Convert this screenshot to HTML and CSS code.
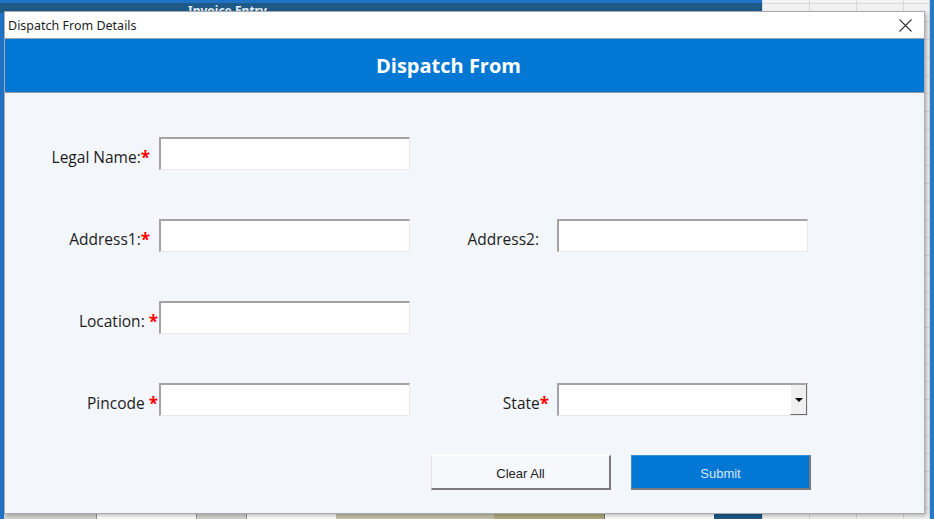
FILE: index.html
```html
<!DOCTYPE html>
<html>
<head>
	<meta charset="UTF-8">
	<title>Dispatch From Details</title>
	<link rel="stylesheet" href="styles.css">
</head>
<body>
	<div class="desktop">
		<div class="sheet-top">
			<div class="sheet-band"><span class="sheet-title">Invoice Entry</span></div>
		</div>
		<div class="sheet-grid"></div>
		<div class="sheet-edge"></div>
		<div class="sheet-bottom">
			<span class="cell c1"></span>
			<span class="cell c2"></span>
			<span class="cell c3"></span>
			<span class="cell c4"></span>
			<span class="cell c5"></span>
			<span class="cell c6"></span>
			<span class="cell c7"></span>
			<span class="cell c8"></span>
		</div>

		<div class="dialog">
			<div class="titlebar">
				<span class="caption">Dispatch From Details</span>
				<svg class="close" width="13" height="13" viewBox="0 0 13 13">
					<path d="M0.5 0.5 L12.5 12.5 M12.5 0.5 L0.5 12.5" stroke="#333" stroke-width="1.1" fill="none"/>
				</svg>
			</div>
			<div class="banner">Dispatch From</div>
			<div class="form">
				<div class="grid">
					<label class="lbl">Legal Name:<b>*</b></label>
					<div class="field"></div>
					<span></span>
					<span></span>

					<label class="lbl">Address1:<b>*</b></label>
					<div class="field"></div>
					<label class="lbl lbl-wide">Address2:</label>
					<div class="field"></div>

					<label class="lbl lbl-tight">Location: <b>*</b></label>
					<div class="field"></div>
					<span></span>
					<span></span>

					<label class="lbl lbl-tight">Pincode <b>*</b></label>
					<div class="field"></div>
					<label class="lbl lbl-state">State<b>*</b></label>
					<div class="field combo"><span class="drop"><i></i></span></div>
				</div>
				<div class="actions">
					<button class="btn">Clear All</button>
					<button class="btn btn-blue">Submit</button>
				</div>
			</div>
		</div>
	</div>
</body>
</html>
```

FILE: styles.css
```css
*{
	padding: 0;
	margin: 0;
	box-sizing: border-box;
}
body{
	width: 934px;
	height: 519px;
	overflow: hidden;
	background: #e9e9e9;
	font-family: "Noto Sans", "Open Sans", sans-serif;
}
.desktop{
	width: 934px;
	height: 519px;
	position: relative;
	overflow: hidden;
	background: #f2f2f2;
}

/* sheet behind the form */
.sheet-top{
	height: 13px;
	width: 762px;
	background: #1f72c4;
	padding-top: 3px;
}
.sheet-band{
	height: 10px;
	background: #1d5a88;
	position: relative;
}
.sheet-title{
	position: absolute;
	left: 188px;
	top: 1px;
	color: #e8eef5;
	font-weight: bold;
	font-size: 12px;
	line-height: 14px;
}
.sheet-grid{
	position: absolute;
	left: 762px;
	top: 0;
	width: 168px;
	height: 519px;
	background-color: #f3f3f3;
	background-image:
		linear-gradient(#d9d9d9 1px, transparent 1px),
		linear-gradient(90deg, #d9d9d9 1px, transparent 1px);
	background-size: 47px 18px;
	background-position: 0 3px;
}
.sheet-edge{
	position: absolute;
	left: 929px;
	top: 0;
	width: 5px;
	height: 519px;
	background: #2a78c6;
	border-left: 1px solid #c9d3de;
}
.desktop::before{
	content: "";
	position: absolute;
	left: 0;
	top: 0;
	width: 4px;
	height: 519px;
	background: #1f72c4;
}
.sheet-bottom{
	position: absolute;
	left: 4px;
	top: 513px;
	width: 758px;
	height: 6px;
	display: flex;
}
.cell{
	height: 6px;
}
.c1{ width: 92px; background: #d6d6d2; }
.c2{ width: 100px; background: #fff; border-left: 1px solid #999; }
.c3{ width: 50px; background: #d6d6d2; border-left: 1px solid #999; }
.c4{ width: 90px; background: #fff; border-left: 1px solid #999; }
.c5{ width: 158px; background: #c9c6ae; }
.c6{ width: 110px; background: #b3ae80; }
.c7{ width: 110px; background: #fff; border-top: 1px solid #777; border-left: 1px solid #777; }
.c8{ width: 48px; background: #1d5a88; }

/* dialog */
.dialog{
	position: absolute;
	left: 4px;
	top: 11px;
	width: 921px;
	height: 503px;
	background: #f3f6fb;
	border: 1px solid #a8acb2;
	box-shadow: 2px 2px 4px rgba(0,0,0,0.25);
	display: flex;
	flex-direction: column;
}
.titlebar{
	height: 27px;
	background: #fff;
	display: flex;
	align-items: center;
	justify-content: space-between;
	padding: 0 12px 0 3px;
	border-bottom: 1px solid #9aa0a6;
}
.caption{
	font-size: 12.5px;
	color: #1e1e1e;
	margin-top: 1px;
}
.close{
	margin-top: 1px;
}
.banner{
	height: 54px;
	background: #0277d4;
	color: #fff;
	font-family: "Open Sans", "Noto Sans", sans-serif;
	font-weight: 700;
	font-size: 20px;
	display: flex;
	align-items: center;
	justify-content: center;
	border-bottom: 1px solid #8c99a6;
	padding: 0 32px 0 0;
}
.form{
	flex: 1;
	padding-top: 44px;
}
.grid{
	display: grid;
	grid-template-columns: 154px 251px 147px 251px;
	grid-auto-rows: 33px;
	row-gap: 49px;
}
.lbl{
	display: flex;
	align-items: center;
	justify-content: flex-end;
	padding: 7px 9px 0 0;
	font-family: "Open Sans", "Noto Sans", sans-serif;
	font-size: 15.5px;
	color: #1c1c1c;
	white-space: pre;
}
.lbl b{
	color: #f00;
	font-weight: bold;
	font-size: 17px;
	line-height: 14px;
	margin-top: 2px;
}
.lbl-tight{
	padding-right: 1px;
}
.lbl-wide{
	padding-right: 18px;
}
.lbl-state{
	padding-right: 8px;
}
.field{
	background: #fff;
	border-top: 2px solid #a3a3a3;
	border-left: 2px solid #a3a3a3;
	border-right: 1px solid #e6e8ec;
	border-bottom: 1px solid #e6e8ec;
	position: relative;
}
.combo .drop{
	position: absolute;
	right: 0;
	top: 0;
	width: 17px;
	height: 30px;
	background: #f0f0f0;
	border-left: 1px solid #fff;
	border-right: 1px solid #6d6d6d;
	border-bottom: 1px solid #6d6d6d;
	display: flex;
	align-items: center;
	justify-content: center;
}
.combo .drop i{
	width: 0;
	height: 0;
	border-left: 4px solid transparent;
	border-right: 4px solid transparent;
	border-top: 4px solid #000;
	margin-top: 1px;
}
.actions{
	width: 806px;
	margin-top: 39px;
	display: flex;
	justify-content: flex-end;
	gap: 20px;
}
.btn{
	width: 180px;
	height: 35px;
	font-family: "Liberation Sans", Arial, sans-serif;
	font-size: 13px;
	color: #222;
	background: #f6f8fb;
	border-top: 1px solid #fff;
	border-left: 1px solid #e0e0e0;
	border-right: 2px solid #7a7a7a;
	border-bottom: 2px solid #7a7a7a;
	padding-top: 2px;
}
.btn-blue{
	background: #0277d4;
	color: #dbe8f6;
	border-left-color: #3a8fd8;
	border-top-color: #3a8fd8;
}
```
